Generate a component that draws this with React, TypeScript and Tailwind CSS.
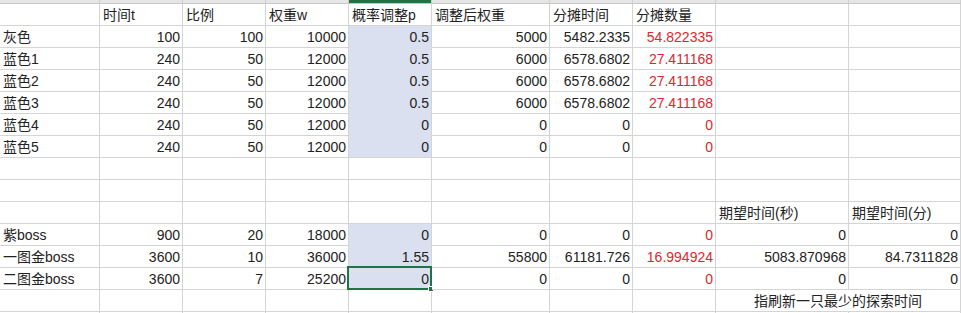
import React from "react";

// column widths include the 1px right gridline
const COLS = [100, 83, 83, 83, 83, 118, 83, 83, 133, 112];
const RED_COL = 7;
const BLUE_COL = 4;

type Cell = string | number | null;

const ROWS: Cell[][] = [
  [null, "时间t", "比例", "权重w", "概率调整p", "调整后权重", "分摊时间", "分摊数量", null, null],
  ["灰色", 100, 100, 10000, 0.5, 5000, "5482.2335", "54.822335", null, null],
  ["蓝色1", 240, 50, 12000, 0.5, 6000, "6578.6802", "27.411168", null, null],
  ["蓝色2", 240, 50, 12000, 0.5, 6000, "6578.6802", "27.411168", null, null],
  ["蓝色3", 240, 50, 12000, 0.5, 6000, "6578.6802", "27.411168", null, null],
  ["蓝色4", 240, 50, 12000, 0, 0, 0, 0, null, null],
  ["蓝色5", 240, 50, 12000, 0, 0, 0, 0, null, null],
  [null, null, null, null, null, null, null, null, null, null],
  [null, null, null, null, null, null, null, null, null, null],
  [null, null, null, null, null, null, null, null, "期望时间(秒)", "期望时间(分)"],
  ["紫boss", 900, 20, 18000, 0, 0, 0, 0, 0, 0],
  ["一图金boss", 3600, 10, 36000, 1.55, 55800, "61181.726", "16.994924", "5083.870968", "84.7311828"],
  ["二图金boss", 3600, 7, 25200, 0, 0, 0, 0, 0, 0],
];

// rows (0-based) where column E is part of the selection
const BLUE_ROWS = [1, 2, 3, 4, 5, 6, 10, 11, 12];
const ACTIVE_ROW = 12;

function isNumeric(v: Cell) {
  return typeof v === "number" || (typeof v === "string" && /^[0-9.]+$/.test(v));
}

function GridCell({ value, col, row }: { value: Cell; col: number; row: number }) {
  const blue = col === BLUE_COL && BLUE_ROWS.includes(row);
  const blueBelow = col === BLUE_COL && BLUE_ROWS.includes(row + 1);
  const right = isNumeric(value);
  const red = col === RED_COL && right;
  return (
    <div
      className={`relative h-[22px] shrink-0 flex items-end border-r border-b border-r-[#d4d4d4] leading-[16px] whitespace-nowrap ${
        blue ? "bg-[#dae0ef]" : "bg-white"
      } ${blue && blueBelow ? "border-b-[#dae0ef]" : "border-b-[#d4d4d4]"} ${
        right ? "justify-end pr-[2px]" : "justify-start pl-[3px]"
      } ${red ? "text-[#e0262e]" : "text-[#222]"}`}
      style={{ width: COLS[col] }}
    >
      {value !== null && <span className="pb-[2px]">{value}</span>}
      {col === BLUE_COL && row === ACTIVE_ROW && (
        <>
          <div className="absolute -top-[2px] -left-[2px] -right-[1px] -bottom-[1px] border-2 border-[#217346] pointer-events-none" />
          <div className="absolute -right-[3px] -bottom-[3px] w-[6px] h-[6px] bg-[#217346] border border-white" />
        </>
      )}
    </div>
  );
}

export default function App() {
  return (
    <div
      className="w-[961px] h-[313px] overflow-hidden bg-white text-[14px]"
      style={{ fontFamily: '"Liberation Sans", "Noto Sans CJK SC", sans-serif' }}
    >
      {/* column header strip (cut off) */}
      <div className="flex h-[4px] border-b border-[#c8c8c8] bg-[#e6e6e6]">
        {COLS.map((w, i) => (
          <div
            key={i}
            className={`h-full shrink-0 border-r border-[#d0d0d0] ${i === BLUE_COL ? "bg-[#217346]" : ""}`}
            style={{ width: w }}
          />
        ))}
      </div>

      {ROWS.map((r, ri) => (
        <div key={ri} className="flex">
          {r.map((v, ci) => (
            <GridCell key={ci} value={v} col={ci} row={ri} />
          ))}
        </div>
      ))}

      {/* row 14: merged I:J note */}
      <div className="flex">
        {COLS.slice(0, 8).map((w, i) => (
          <div key={i} className="h-[22px] shrink-0 border-r border-b border-[#d4d4d4]" style={{ width: w }} />
        ))}
        <div className="h-[22px] w-[245px] shrink-0 flex items-end justify-center border-r border-b border-[#d4d4d4] leading-[16px] text-[#222]">
          <span className="pb-[2px]">指刷新一只最少的探索时间</span>
        </div>
      </div>

      <div className="flex">
        {COLS.map((w, i) => (
          <div key={i} className="h-[22px] shrink-0 border-r border-[#d4d4d4]" style={{ width: w }} />
        ))}
      </div>
    </div>
  );
}
